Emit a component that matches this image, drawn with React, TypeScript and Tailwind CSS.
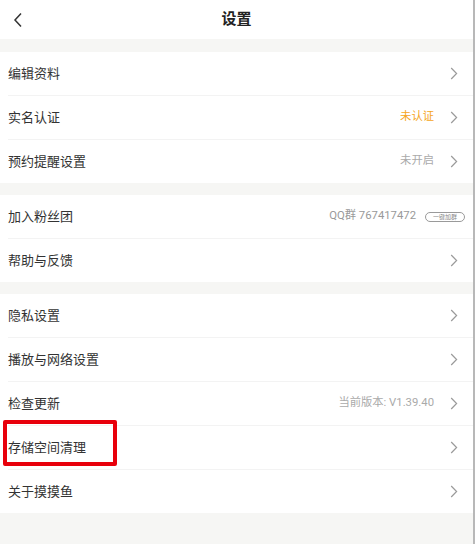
import React from "react";

const Chevron = () => (
  <svg width="8" height="13" viewBox="0 0 8 13" className="shrink-0">
    <path d="M1.2 1 L6.6 6.5 L1.2 12" fill="none" stroke="#9a9a9a" strokeWidth="1.2" />
  </svg>
);

type Row = { label: string; value?: string; valueClass?: string; badge?: boolean };

const Item = ({ r, divider }: { r: Row; divider: boolean }) => (
  <div className="flex flex-col pl-2">
    <div className="h-[43px] flex items-center pr-[15px]">
      <span className="text-[13px] text-[#333]">{r.label}</span>
      <div className="ml-auto flex items-center">
        {r.value && (
          <span className={`text-[11.3px] ${r.valueClass ?? "text-[#aaa]"}`}>{r.value}</span>
        )}
        {r.badge ? (
          <span className="ml-[9px] mr-[-7px] h-[10px] w-[40px] rounded-full border border-[#9a9a9a] text-[6px] leading-[8px] text-[#888] flex items-center justify-center">
            一键加群
          </span>
        ) : (
          <span className="ml-[16px] flex items-center">
            <Chevron />
          </span>
        )}
      </div>
    </div>
    {divider && <div className="h-px bg-[#f3f3f3]" />}
  </div>
);

const Section = ({ rows }: { rows: Row[] }) => (
  <div className="bg-white">
    {rows.map((r, i) => (
      <Item key={r.label} r={r} divider={i < rows.length - 1} />
    ))}
  </div>
);

export default function App() {
  return (
    <div
      className="w-[475px] h-[544px] bg-[#f6f6f4] relative border-r-2 border-[#b8b8b8] overflow-hidden"
      style={{ fontFamily: "Roboto, 'Noto Sans CJK SC', sans-serif" }}
    >
      <div className="h-[39px] bg-white relative flex items-center justify-center">
        <svg width="10" height="16" viewBox="0 0 10 16" className="absolute left-[13px] top-[12px]">
          <path d="M8 1.5 L2 8 L8 14.5" fill="none" stroke="#333" strokeWidth="1.5" />
        </svg>
        <span className="text-[15px] font-bold text-[#222]">设置</span>
      </div>
      <div className="h-[13px]" />
      <Section
        rows={[
          { label: "编辑资料" },
          { label: "实名认证", value: "未认证", valueClass: "text-[#f5a623]" },
          { label: "预约提醒设置", value: "未开启" },
        ]}
      />
      <div className="h-[12px]" />
      <Section
        rows={[
          { label: "加入粉丝团", value: "QQ群 767417472", valueClass: "text-[#999]", badge: true },
          { label: "帮助与反馈" },
        ]}
      />
      <div className="h-[12px]" />
      <Section
        rows={[
          { label: "隐私设置" },
          { label: "播放与网络设置" },
          { label: "检查更新", value: "当前版本: V1.39.40" },
          { label: "存储空间清理" },
          { label: "关于摸摸鱼" },
        ]}
      />
      <div className="absolute left-[3px] top-[420px] w-[114px] h-[46px] border-[4px] border-[#e8000b] rounded-[2px]" />
    </div>
  );
}
